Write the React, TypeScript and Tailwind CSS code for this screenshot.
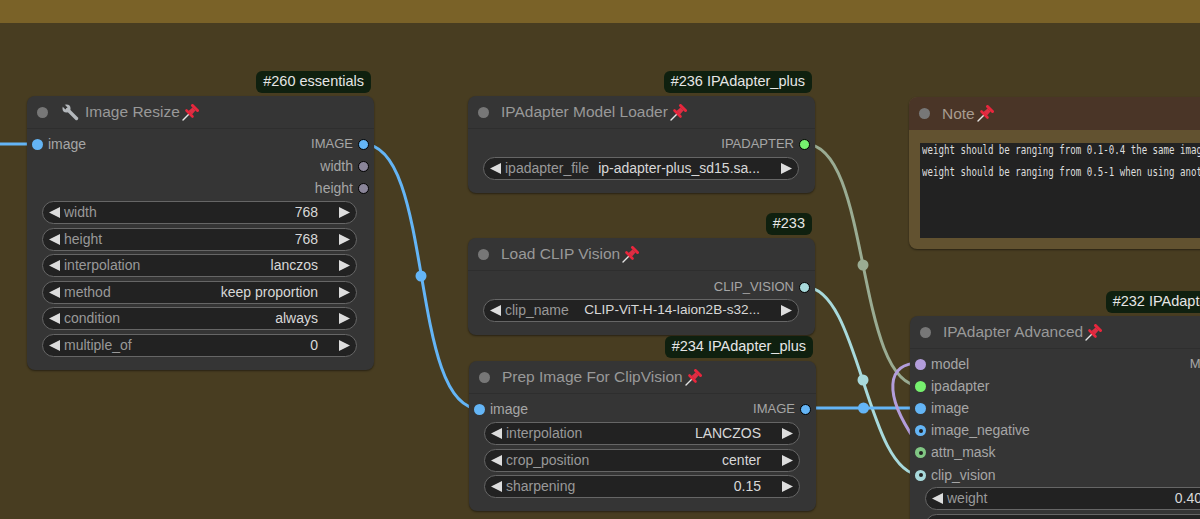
import React from 'react'

const PinIcon = () => (
  <svg width="17" height="17" viewBox="0 0 17 17" className="ml-[2px] flex-shrink-0">
    <path d="M1 16 L7 10" stroke="#e4e4e4" strokeWidth="1.4" strokeLinecap="round" />
    <path d="M10.5 1.5 L15.5 6.5" stroke="#e8263c" strokeWidth="3" strokeLinecap="round" />
    <path d="M10.5 3.5 L13.5 6.5 L10 10.5 L6.5 7 Z" fill="#dd2e44" />
    <path d="M4.5 6.5 L10.5 12.5" stroke="#e8263c" strokeWidth="2.6" strokeLinecap="round" />
  </svg>
)

const WrenchIcon = () => (
  <svg width="17" height="17" viewBox="0 0 17 17" className="flex-shrink-0">
    <circle cx="4.5" cy="4.5" r="4" fill="#b4b8bc" />
    <path d="M1 1 L4.5 4.5" stroke="#353535" strokeWidth="3" />
    <path d="M5.5 5.5 L14.5 14.5" stroke="#b4b8bc" strokeWidth="3.4" strokeLinecap="round" />
  </svg>
)

const Arrow = ({ right }: { right?: boolean }) => (
  <svg width="11" height="11" viewBox="0 0 11 11" className="flex-shrink-0">
    <path d={right ? 'M0 0 L11 5.5 L0 11 Z' : 'M11 0 L0 5.5 L11 11 Z'} fill="#dddddd" />
  </svg>
)

const Widget = ({ name, value, small }: { name: string; value: string; small?: boolean }) => (
  <div className="flex h-[23px] items-center rounded-full border border-[#666] bg-[#222] pl-[6px] pr-[6px] text-[14px]">
    <Arrow />
    <span className="ml-[4px] flex-shrink-0 text-[#999]">{name}</span>
    <span className={`ml-[8px] min-w-0 flex-1 whitespace-nowrap text-right text-[#d8d8d8] ${small ? 'text-[13.6px]' : ''}`}>{value}</span>
    <span className="ml-[21px] flex">
      <Arrow right />
    </span>
  </div>
)

type Dot = { color: string; ring?: boolean; hollow?: boolean }

const SlotDot = ({ color, ring, hollow }: Dot) => (
  <span className={`flex h-[11px] w-[11px] flex-shrink-0 items-center justify-center rounded-full ${ring ? 'border border-black' : ''} ${color}`}>
    {hollow && <span className="h-[4px] w-[4px] rounded-full bg-[#222]" />}
  </span>
)

const InputRow = ({ label, dot }: { label: string; dot: Dot }) => (
  <div className="flex h-[22.2px] items-center gap-[5px] text-[14px] text-[#a6a6a6]">
    <SlotDot {...dot} />
    <span>{label}</span>
  </div>
)

const OutputRow = ({ label, dot, caps }: { label: string; dot: Dot; caps?: boolean }) => (
  <div className={`flex h-[22.2px] items-center justify-end gap-[5px] text-[#a6a6a6] ${caps ? 'text-[13px]' : 'text-[14px]'}`}>
    <span>{label}</span>
    <SlotDot {...dot} />
  </div>
)

const Title = ({ text, icon, dark }: { text: string; icon?: boolean; dark?: boolean }) => (
  <div className={`flex h-[33px] items-center pl-[10px] text-[15.5px] ${dark ? 'bg-[#4a3527] text-[#a89c90]' : 'border-b border-[#2e2e2e] text-[#999]'}`}>
    <span className="h-[11px] w-[11px] rounded-full bg-[#777]" />
    {icon ? (
      <span className="ml-[14px] mr-[6px] flex">
        <WrenchIcon />
      </span>
    ) : (
      <span className="w-[12px]" />
    )}
    <span>{text}</span>
    <PinIcon />
  </div>
)

const Badge = ({ text }: { text: string }) => (
  <div className="absolute bottom-full right-[3px] mb-[3px] flex h-[22px] items-center whitespace-nowrap rounded-[6px] bg-[#0f200f] px-[7px] text-[14.5px] text-[#e6e6e6]">
    {text}
  </div>
)

const Node = ({ className, children }: { className: string; children: React.ReactNode }) => (
  <div className={`absolute w-[347px] rounded-[8px] bg-[#353535] shadow-[0_1px_2px_rgba(0,0,0,0.45)] ${className}`}>
    {children}
  </div>
)

// control points sit a quarter of the link length out from each end
const Wires = () => (
  <svg width="1200" height="519" viewBox="0 0 1200 519" className="absolute left-0 top-0" fill="none">
    <path d="M0 144 L37 144" stroke="#64b5f6" strokeWidth="3" />
    <path d="M363 144 C 435 144, 408 409, 480 409" stroke="#64b5f6" strokeWidth="3" />
    <circle cx="421" cy="276" r="5.5" fill="#64b5f6" />
    <path d="M805 144 C 872 144, 854 386, 921 386" stroke="#9aac93" strokeWidth="3" />
    <circle cx="863" cy="265" r="5.5" fill="#9aac93" />
    <path d="M805 287 C 860 287, 866 475, 921 475" stroke="#a8dadc" strokeWidth="3" />
    <circle cx="863" cy="380" r="5.5" fill="#a8dadc" />
    <path d="M806 408 L921 408" stroke="#64b5f6" strokeWidth="3" />
    <circle cx="863.5" cy="408" r="5.5" fill="#64b5f6" />
    <path d="M921 363 C 885 362, 884 395, 915 440" stroke="#b39ddb" strokeWidth="3" />
  </svg>
)

const blue = 'bg-[#64b5f6]'

export default function App() {
  return (
    <div className="relative h-[519px] w-[1200px] overflow-hidden bg-[#483d21] font-['Liberation_Sans',sans-serif]">
      <div className="h-[23px] bg-[#7a6228]" />
      <Wires />

      {/* Image Resize */}
      <Node className="left-[27px] top-[96px] h-[274px]">
        <Badge text="#260 essentials" />
        <Title text="Image Resize" icon />
        <div className="px-[5px] pt-[4px]">
          <InputRow label="image" dot={{ color: blue }} />
          <div className="-mt-[22.2px]">
            <OutputRow label="IMAGE" caps dot={{ color: blue, ring: true }} />
            <OutputRow label="width" dot={{ color: 'bg-[#8a8599]', ring: true }} />
            <OutputRow label="height" dot={{ color: 'bg-[#8a8599]', ring: true }} />
          </div>
        </div>
        <div className="mt-[1.4px] flex flex-col gap-[3.6px] pl-[15px] pr-[17px]">
          <Widget name="width" value="768" />
          <Widget name="height" value="768" />
          <Widget name="interpolation" value="lanczos" />
          <Widget name="method" value="keep proportion" />
          <Widget name="condition" value="always" />
          <Widget name="multiple_of" value="0" />
        </div>
      </Node>

      {/* IPAdapter Model Loader */}
      <Node className="left-[468px] top-[96px] h-[97px]">
        <Badge text="#236 IPAdapter_plus" />
        <Title text="IPAdapter Model Loader" />
        <div className="px-[5px] pt-[4px]">
          <OutputRow label="IPADAPTER" caps dot={{ color: 'bg-[#76f06e]', ring: true }} />
        </div>
        <div className="mt-[2px] pl-[15px] pr-[16px]">
          <Widget name="ipadapter_file" value="ip-adapter-plus_sd15.sa..." />
        </div>
      </Node>

      {/* Load CLIP Vision */}
      <Node className="left-[468px] top-[238px] h-[97px]">
        <Badge text="#233" />
        <Title text="Load CLIP Vision" />
        <div className="px-[5px] pt-[5px]">
          <OutputRow label="CLIP_VISION" caps dot={{ color: 'bg-[#a8dadc]', ring: true }} />
        </div>
        <div className="mt-[1px] pl-[15px] pr-[16px]">
          <Widget name="clip_name" value="CLIP-ViT-H-14-laion2B-s32..." small />
        </div>
      </Node>

      {/* Prep Image For ClipVision */}
      <Node className="left-[469px] top-[361px] h-[150px]">
        <Badge text="#234 IPAdapter_plus" />
        <Title text="Prep Image For ClipVision" />
        <div className="px-[5px] pt-[4px]">
          <InputRow label="image" dot={{ color: blue }} />
          <div className="-mt-[22.2px]">
            <OutputRow label="IMAGE" caps dot={{ color: blue, ring: true }} />
          </div>
        </div>
        <div className="mt-[2px] flex flex-col gap-[3.6px] pl-[15px] pr-[16px]">
          <Widget name="interpolation" value="LANCZOS" />
          <Widget name="crop_position" value="center" />
          <Widget name="sharpening" value="0.15" />
        </div>
      </Node>

      {/* Note */}
      <div className="absolute left-[909px] top-[97px] h-[152px] w-[347px] overflow-hidden rounded-[8px] bg-[#625230] shadow-[0_1px_2px_rgba(0,0,0,0.45)]">
        <Title text="Note" dark />
        <div className="ml-[11px] mt-[13px] h-[95px] w-[330px] overflow-hidden bg-[#222] pl-[2px] font-['DejaVu_Sans_Mono',monospace] text-[12px] leading-[22px] text-[#ddd]">
          <div className="-mt-[4px] origin-left scale-x-[0.76] whitespace-nowrap">weight should be ranging from 0.1-0.4 the same image</div>
          <div className="origin-left scale-x-[0.76] whitespace-nowrap">weight should be ranging from 0.5-1 when using another</div>
        </div>
      </div>

      {/* IPAdapter Advanced */}
      <Node className="left-[910px] top-[316px] h-[260px]">
        <Badge text="#232 IPAdapter_plus" />
        <Title text="IPAdapter Advanced" />
        <div className="px-[5px] pt-[4px]">
          <InputRow label="model" dot={{ color: 'bg-[#b39ddb]' }} />
          <div className="-mt-[22.2px]">
            <OutputRow label="MODEL" caps dot={{ color: 'bg-[#b39ddb]', ring: true }} />
          </div>
          <InputRow label="ipadapter" dot={{ color: 'bg-[#76f06e]' }} />
          <InputRow label="image" dot={{ color: blue }} />
          <InputRow label="image_negative" dot={{ color: blue, hollow: true }} />
          <InputRow label="attn_mask" dot={{ color: 'bg-[#81c784]', hollow: true }} />
          <InputRow label="clip_vision" dot={{ color: 'bg-[#a8dadc]', hollow: true }} />
        </div>
        <div className="mt-[1px] flex flex-col gap-[3.6px] pl-[15px] pr-[16px]">
          <Widget name="weight" value="0.40" />
          <Widget name="weight_type" value="linear" />
        </div>
      </Node>
    </div>
  )
}
